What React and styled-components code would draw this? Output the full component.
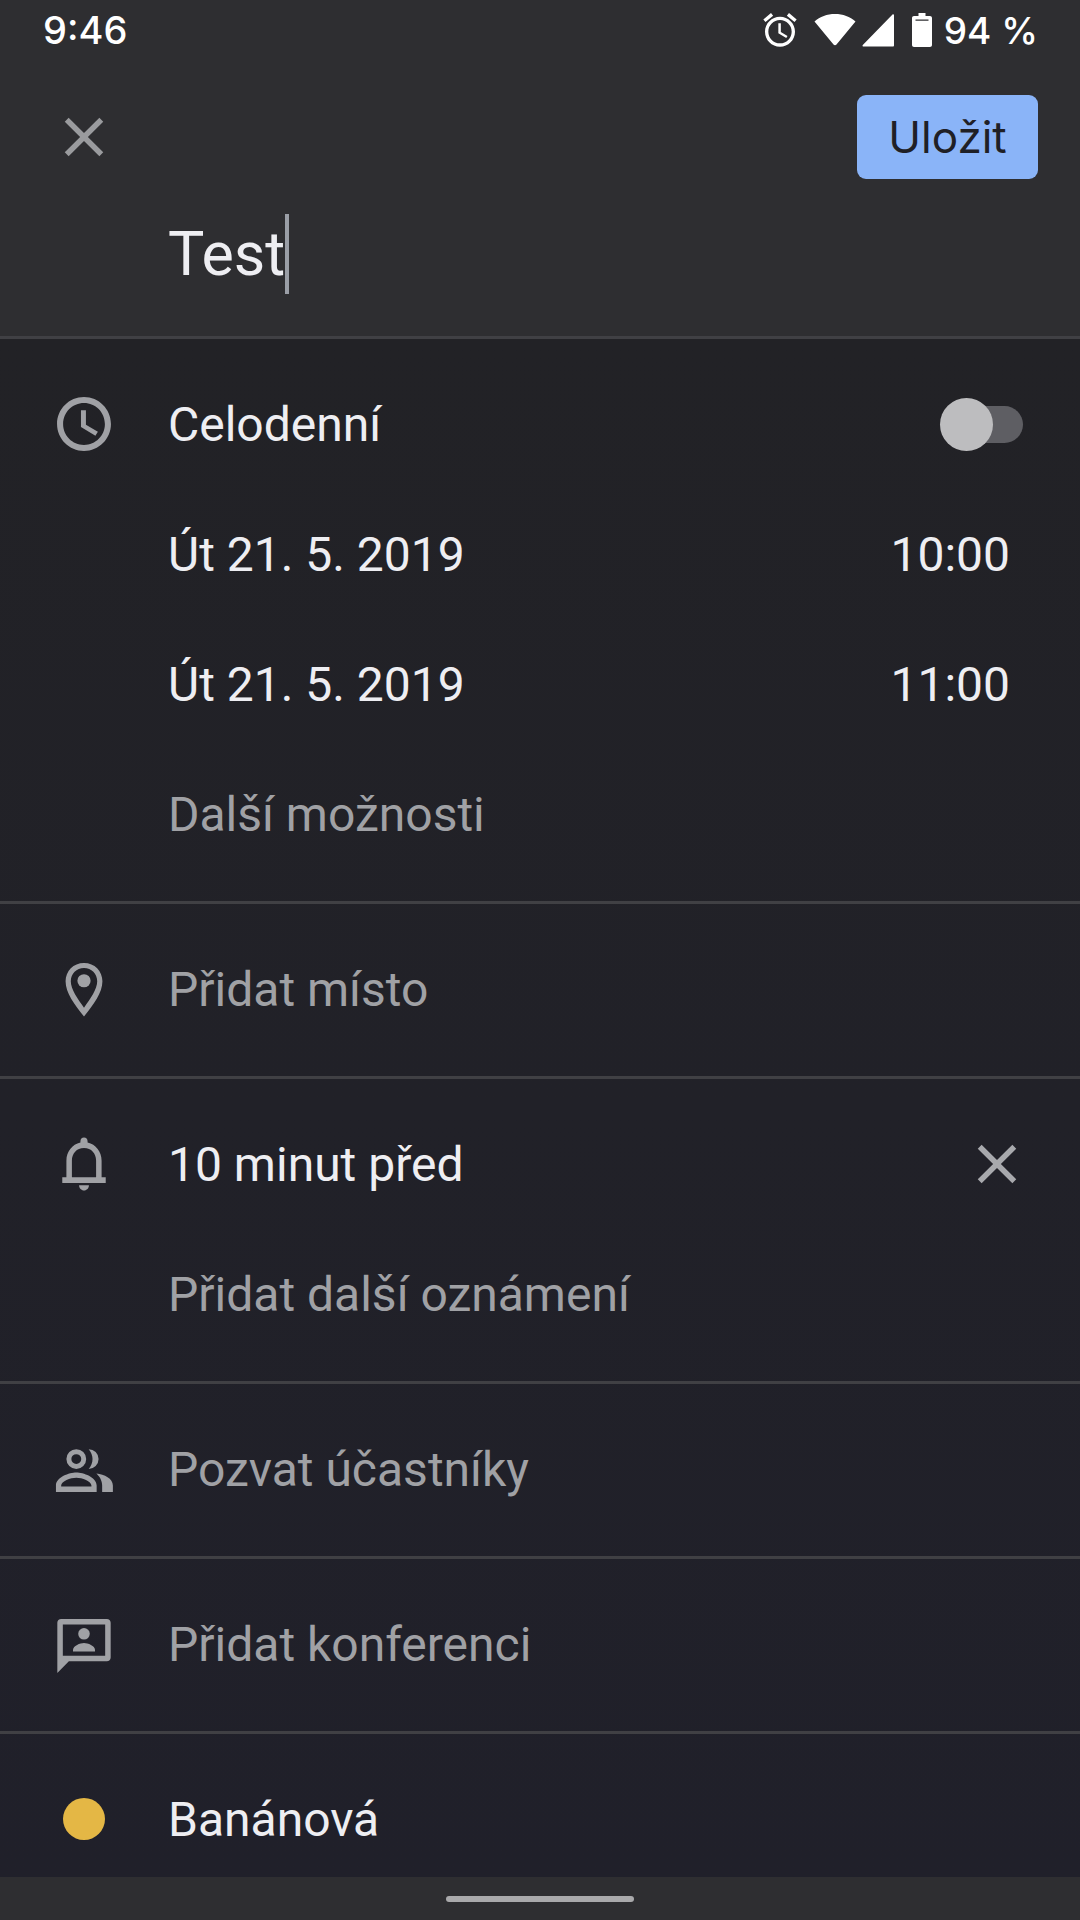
import styled, { createGlobalStyle } from 'styled-components'

const GlobalStyle = createGlobalStyle`
  html, body {
    margin: 0;
    height: 100%;
    background: #2e2e31;
  }
  #root {
    height: 100%;
  }
`

const CloseIcon = ({ color }) => (
  <Icon viewBox="0 0 24 24" fill={color}>
    <path d="M19 6.41 17.59 5 12 10.59 6.41 5 5 6.41 10.59 12 5 17.59 6.41 19 12 13.41 17.59 19 19 17.59 13.41 12z" />
  </Icon>
)

const ClockIcon = () => (
  <Icon viewBox="0 0 24 24" fill="#a0a1a5">
    <path d="M12 2.2C6.600 2.200 2.200 6.600 2.200 12s4.400 9.800 9.800 9.800 9.800-4.400 9.800-9.800S17.400 2.200 12 2.200zM12 19.600c-4.200 0-7.600-3.400-7.600-7.600s3.400-7.600 7.600-7.600 7.600 3.400 7.600 7.600-3.400 7.600-7.600 7.600z" />
    <path d="M12.700 7H10.900v6.100l5.250 3.150.9-1.400-4.350-2.600z" />
  </Icon>
)

const PlaceIcon = () => (
  <Icon viewBox="0 0 24 24" fill="#a0a1a5">
    <path d="M12 2.5C8.13 2.5 5.3 5.4 5.3 9.2c0 4.2 3.2 8.4 6.7 12.8 3.5-4.4 6.700-8.600 6.700-12.800 0-3.800-2.830-6.700-6.700-6.700zM7.200 9.200c0-2.800 2.100-4.800 4.800-4.800s4.800 2 4.800 4.800c0 2.900-2.500 6.400-4.800 9.600-2.300-3.200-4.800-6.700-4.800-9.600z" />
    <circle cx="12" cy="9" r="2.400" />
  </Icon>
)

const BellIcon = () => (
  <Icon viewBox="0 0 24 24" fill="#a0a1a5">
    <path
      fillRule="evenodd"
      d="M12 2.400c.8 0 1.300.6 1.300 1.300v.5c3 .7 5.100 3.300 5.100 6.600v6h1.500v2.100H4.100v-2.100h1.500v-6c0-3.300 2.100-5.900 5.100-6.600v-.5c0-.7.5-1.300 1.300-1.300zM12 6.200c-2.700 0-4.400 2-4.400 4.600v6h8.800v-6c0-2.600-1.700-4.600-4.400-4.600z"
    />
    <path d="M10.200 19.700h3.600c0 1.100-.8 1.900-1.800 1.900s-1.800-.8-1.800-1.900z" />
  </Icon>
)

const PeopleIcon = () => (
  <Icon viewBox="0 0 24 24" fill="#a0a1a5">
    <path
      fillRule="evenodd"
      d="M9.200 4.800a3.600 3.600 0 1 1 0 7.200 3.600 3.600 0 0 1 0-7.200zm0 1.800a1.800 1.800 0 1 0 0 3.600 1.800 1.800 0 0 0 0-3.600zM1.800 20.400V18c0-3 4.900-4.700 7.400-4.700s7.400 1.700 7.400 4.700v2.400zm1.900-2h11v-.4c0-1.500-3.400-2.800-5.500-2.800s-5.500 1.300-5.500 2.800z"
    />
    <path d="M13.700 4.800a3.600 3.600 0 0 1 0 7.200c.9-1 1.400-2.300 1.400-3.600s-.5-2.600-1.400-3.600z" />
    <path d="M16.500 13.600c2.900.4 6 1.700 6 4.400v2.400h-3.900V18c0-1.800-.9-3.300-2.100-4.400z" />
  </Icon>
)

const ConferenceIcon = () => (
  <Icon viewBox="0 0 24 24" fill="#a0a1a5">
    <path
      fillRule="evenodd"
      d="M3.700 2.900h16.600c.8 0 1.400.6 1.400 1.400v12.600c0 .8-.6 1.400-1.400 1.400H6.500l-4.200 4.200V4.300c0-.8.6-1.400 1.400-1.400zM4.300 4.900v11.400h15.400V4.900z"
    />
    <circle cx="12" cy="8.300" r="2.100" />
    <path d="M8 14.700v-.6c0-1.500 2.600-2.500 4-2.500s4 1 4 2.500v.6z" />
  </Icon>
)

const AlarmIcon = () => (
  <StatusGlyph $w={40} $h={40} viewBox="0 0 24 24" fill="#fff">
    <path d="M22 5.720l-4.600-3.860-1.290 1.530 4.600 3.860L22 5.720zM7.880 3.390L6.600 1.860 2 5.710l1.290 1.530 4.590-3.850zM12.500 8H11v6l4.750 2.850.75-1.230-4-2.370V8zM12 4c-4.970 0-9 4.030-9 9s4.030 9 9 9 9-4.030 9-9-4.030-9-9-9zm0 16c-3.870 0-7-3.130-7-7s3.130-7 7-7 7 3.130 7 7-3.130 7-7 7z" />
  </StatusGlyph>
)

const WifiIcon = () => (
  <StatusGlyph $w={42} $left={14} viewBox="0 0 42 34" fill="#fff">
    <path d="M0.500 8.500C6 3.500 13 1 21 1s15 2.500 20.500 7.500L22.500 31.500c-.8 1-2.200 1-3 0z" />
  </StatusGlyph>
)

const SignalIcon = () => (
  <StatusGlyph $w={32} $left={6} viewBox="0 0 32 34" fill="#fff">
    <path d="M32 2v30.500c0 .5-.4 1-1 1H1.500c-.9 0-1.300-1-.7-1.600L30.500 1.500c.6-.6 1.500-.2 1.500.5z" />
  </StatusGlyph>
)

const BatteryIcon = () => (
  <StatusGlyph $w={20} $left={18} viewBox="0 0 20 34" fill="#fff">
    <path
      fillRule="evenodd"
      d="M6.500 0h7v3H18c1.100 0 2 .9 2 2v27c0 1.100-.9 2-2 2H2c-1.100 0-2-.9-2-2V5c0-1.100.9-2 2-2h4.500zM3.500 6.500v1.200h13V6.500z"
    />
  </StatusGlyph>
)

const App = () => {
  return (
    <Screen>
      <GlobalStyle />
      <Header>
        <StatusBar>
          <Clock>9:46</Clock>
          <StatusIcons>
            <AlarmIcon />
            <WifiIcon />
            <SignalIcon />
            <BatteryIcon />
            <Battery>94 %</Battery>
          </StatusIcons>
        </StatusBar>
        <Toolbar>
          <CloseIcon color="#9a9b9e" />
          <SaveButton>Uložit</SaveButton>
        </Toolbar>
        <TitleRow>
          <Title>Test</Title>
          <Caret />
        </TitleRow>
      </Header>

      <Main>
        <Section>
          <Row>
            <IconSlot>
              <ClockIcon />
            </IconSlot>
            <Label>Celodenní</Label>
            <Toggle>
              <Thumb />
            </Toggle>
          </Row>
          <Row>
            <IconSlot />
            <Label>Út 21. 5. 2019</Label>
            <Time>10:00</Time>
          </Row>
          <Row>
            <IconSlot />
            <Label>Út 21. 5. 2019</Label>
            <Time>11:00</Time>
          </Row>
          <Row>
            <IconSlot />
            <Label $muted>Další možnosti</Label>
          </Row>
        </Section>

        <Section>
          <Row>
            <IconSlot>
              <PlaceIcon />
            </IconSlot>
            <Label $muted>Přidat místo</Label>
          </Row>
        </Section>

        <Section>
          <Row>
            <IconSlot>
              <BellIcon />
            </IconSlot>
            <Label>10 minut před</Label>
            <RemoveSlot>
              <CloseIcon color="#a8a9ad" />
            </RemoveSlot>
          </Row>
          <Row>
            <IconSlot />
            <Label $muted>Přidat další oznámení</Label>
          </Row>
        </Section>

        <Section>
          <Row>
            <IconSlot>
              <PeopleIcon />
            </IconSlot>
            <Label $muted>Pozvat účastníky</Label>
          </Row>
        </Section>

        <Section>
          <Row>
            <IconSlot>
              <ConferenceIcon />
            </IconSlot>
            <Label $muted>Přidat konferenci</Label>
          </Row>
        </Section>

        <Section $last>
          <Row>
            <IconSlot>
              <ColorDot />
            </IconSlot>
            <Label>Banánová</Label>
          </Row>
        </Section>
      </Main>

      <Footer>
        <HomeBar />
      </Footer>
    </Screen>
  )
}

export default App

const Screen = styled.div`
  display: flex;
  flex-direction: column;

  height: 1920px;
  overflow: hidden;

  font-family: Roboto, 'Liberation Sans', sans-serif;
  background: #2e2e31;
`

const Header = styled.header`
  flex: none;
  height: 336px;

  border-bottom: 3px solid #404044;
`

const StatusBar = styled.div`
  display: flex;
  justify-content: space-between;
  align-items: center;

  height: 60px;
  padding: 0 42px 0 43px;
`

const Clock = styled.span`
  font-family: Inter, sans-serif;
  font-size: 38px;
  font-weight: 500;
  color: #fff;
`

const StatusIcons = styled.div`
  display: flex;
  align-items: center;
`

const StatusGlyph = styled.svg`
  display: block;
  flex: none;

  width: ${p => p.$w}px;
  height: ${p => p.$h || 34}px;
  margin-left: ${p => p.$left || 0}px;
`

const Battery = styled.span`
  margin-left: 12px;

  font-family: Inter, sans-serif;
  font-size: 37px;
  font-weight: 500;
  color: #fff;
`

const Toolbar = styled.div`
  display: flex;
  justify-content: space-between;
  align-items: center;

  height: 84px;
  margin-top: 35px;
  padding: 0 42px 0 51px;
`

const SaveButton = styled.button`
  width: 181px;
  height: 84px;
  padding: 0;

  font-family: Inter, sans-serif;
  font-size: 44px;
  font-weight: 400;
  color: #1f2026;

  background: #8ab4f8;
  border: none;
  border-radius: 9px;
`

const TitleRow = styled.div`
  display: flex;
  align-items: center;

  height: 80px;
  margin-top: 35px;
  padding-left: 168px;
`

const Title = styled.span`
  font-size: 61px;
  color: #eeeef2;
`

const Caret = styled.span`
  width: 4px;
  height: 80px;

  background: #9a9ea6;
`

const Main = styled.main`
  flex: 1;
  min-height: 0;
  overflow: hidden;

  background: linear-gradient(180deg, #222226 0%, #20202a 100%);
`

const Section = styled.section`
  padding: 20px 0 22px;

  border-bottom: ${p => (p.$last ? 'none' : '3px solid #404044')};
`

const Row = styled.div`
  display: flex;
  align-items: center;

  height: 130px;
  padding-right: 70px;
`

const IconSlot = styled.div`
  flex: none;
  display: flex;
  justify-content: center;
  align-items: center;

  width: 168px;
  height: 66px;
`

const Icon = styled.svg`
  display: block;
  flex: none;

  width: 66px;
  height: 66px;
`

const Label = styled.span`
  flex: 1;

  font-size: 48px;
  color: ${p => (p.$muted ? '#a0a1a5' : '#eeeef2')};
`

const Time = styled.span`
  font-size: 48px;
  color: #eeeef2;
`

const Toggle = styled.div`
  position: relative;

  width: 75px;
  height: 37px;
  margin-right: -13px;

  background: #5e5e63;
  border-radius: 19px;
`

const Thumb = styled.div`
  position: absolute;
  top: -8px;
  left: -8px;

  width: 53px;
  height: 53px;

  background: #bdbdbf;
  border-radius: 50%;
`

const RemoveSlot = styled.div`
  margin-right: -20px;
`

const ColorDot = styled.div`
  width: 42px;
  height: 42px;

  background: #e4b745;
  border-radius: 50%;
`

const Footer = styled.footer`
  flex: none;
  display: flex;
  justify-content: center;
  align-items: center;

  height: 43px;
`

const HomeBar = styled.div`
  width: 188px;
  height: 6px;

  background: #a9a9ab;
  border-radius: 3px;
`
